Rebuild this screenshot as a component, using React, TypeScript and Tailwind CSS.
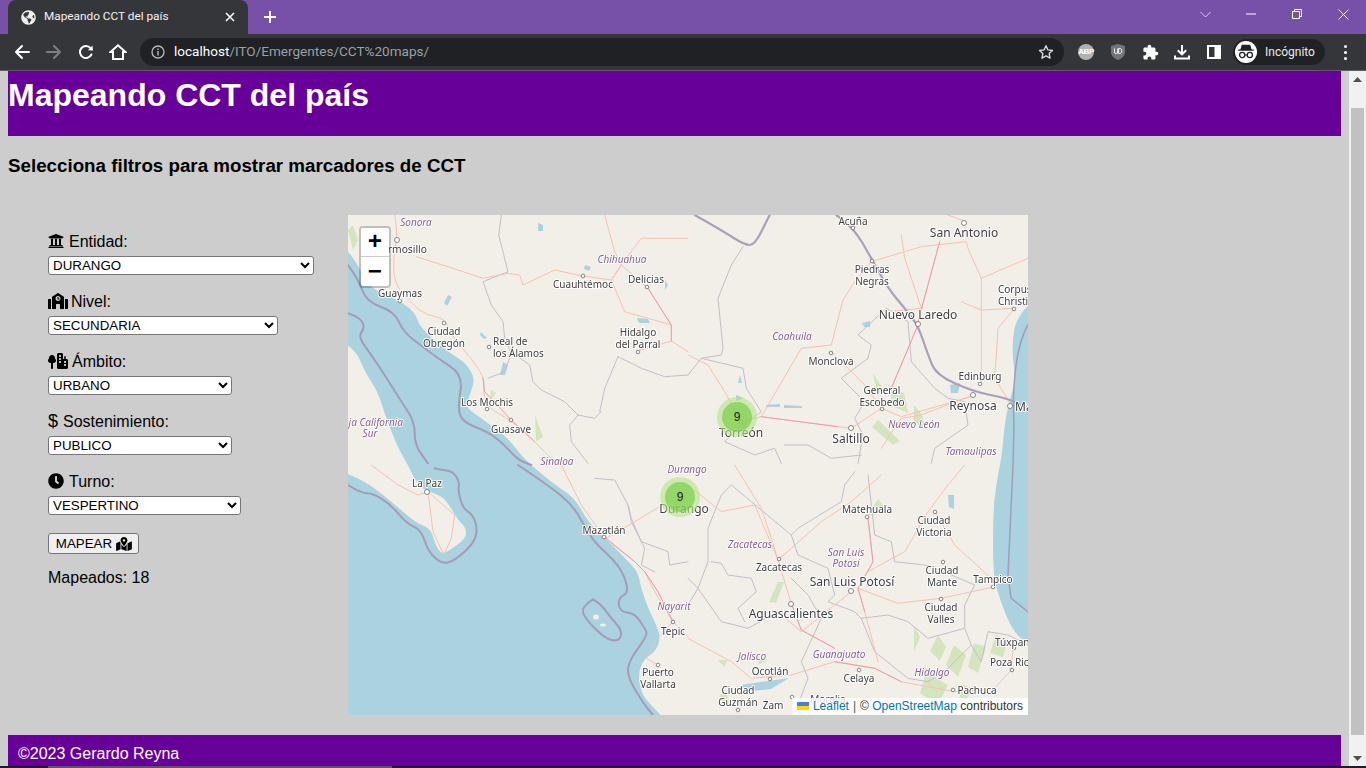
import React from "react";
import { FaGlobeAmericas, FaUniversity, FaSchool, FaClock, FaMapMarkedAlt } from "react-icons/fa";
import { FaTreeCity } from "react-icons/fa6";

type Crop = "A" | "B" | "C" | "D";
const OFF: Record<Crop, [number, number]> = { A: [0, 0], B: [340, 0], C: [0, 250], D: [340, 250] };
const pts = (c: Crop, s: string) => {
  const [ox, oy] = OFF[c];
  const n = s.trim().split(/[\s,]+/).map(Number);
  const out: [number, number][] = [];
  for (let i = 0; i < n.length; i += 2) out.push([ox + n[i] / 3, oy + n[i + 1] / 3]);
  return out;
};
// Smooth curve through the midpoints of a traced chain of points
const smooth = (a: [number, number][]) => {
  let d = `M${a[0][0].toFixed(1)} ${a[0][1].toFixed(1)}`;
  for (let i = 1; i < a.length - 1; i++) {
    const mx = (a[i][0] + a[i + 1][0]) / 2;
    const my = (a[i][1] + a[i + 1][1]) / 2;
    d += `Q${a[i][0].toFixed(1)} ${a[i][1].toFixed(1)} ${mx.toFixed(1)} ${my.toFixed(1)}`;
  }
  const l = a[a.length - 1];
  return d + `L${l[0].toFixed(1)} ${l[1].toFixed(1)}`;
};
const p = (c: Crop, s: string) => smooth(pts(c, s));

const gulf: [number, number][] = [[690,85],[680,90],[672,100],[666,112],[664,140],[668,165],[660,190],[656,215],[654,240],[648,270],[645,300],[645,360],[652,385],[662,410],[673,425],[690,430]];
const west: [number, number][] = [[320,510],[313,500],[300,487],[293,477],[290,457],[297,443],[307,437],[313,423],[307,407],[300,393],[293,373],[290,357],[277,343],[257,323],[240,307],[227,283],[207,270],[183,250],[173,240],[160,223],[133,203],[117,192],[123,177],[127,163],[117,147],[100,137],[72,113],[67,97],[50,85],[20,72],[10,50],[0,36],[-10,30]];
const mainland = `${smooth(gulf)}L690 520L320 520${smooth(west).replace("M", "L")}L-10 -10L690 -10Z`;
const baja = `${smooth([[-10,125],[0,130],[10,140],[17,157],[30,177],[37,200],[50,233],[60,250],[66,263],[74,274],[88,279],[96,283],[103,293],[110,305],[118,313],[118,323],[105,333],[95,339],[90,335],[86,325],[82,313],[68,308],[45,288],[25,272],[8,262],[-10,255]])}Z`;
const outerSea = [
  p("A", "0 150 30 190 55 260 140 290 165 350 230 400 270 430 345 480 330 570 340 620 420 650 470 690 510 735 550 750"),
  p("A", "0 295 40 310 50 340 30 365 70 420 110 480 160 560 200 620 200 690 240 745"),
  p("C", "0 60 40 85 75 85 130 120 175 175 220 195 240 260 285 300 330 280 380 230 388 190 375 150 345 130 330 80 335 50 315 20 285 15 260 10"),
  p("C", "510 0 600 60 680 125 730 225 815 300 845 380 810 400 815 440 860 445 890 490 900 510 840 590 840 640 890 720 915 750"),
  p("C", "735 403 700 425 710 460 770 520 810 530 825 500 790 460 760 420 735 403"),
];
const riverBorder = [
  p("B", "20 0 100 45 170 90 200 90 240 10 245 0"),
  p("B", "445 0 495 35 550 130 600 220 650 280 690 330 720 420 745 480 855 530 960 550 1020 580"),
];
const raw = (c: Crop, s: string) => pts(c, s).map(([x, y], i) => `${i ? "L" : "M"}${x.toFixed(1)} ${y.toFixed(1)}`).join("");
const states = [
  raw("A", "460 0 452 60 480 170 405 200 430 270 465 320 470 370 490 415 470 470 420 490"),
  raw("A", "490 410 545 450 555 500 580 525 650 560 690 600 740 610 760 590"),
  raw("A", "690 600 665 630 670 680 720 745"),
  raw("A", "810 425 770 520 755 590"),
  raw("A", "810 425 880 460 950 485 1020 480"),
  raw("B", "0 480 40 430 165 460 175 520 220 590 150 640 110 680 200 720 260 700 280 745"),
  raw("B", "165 95 130 150 90 250 105 400 100 420 40 430"),
  raw("B", "595 280 510 360 550 390 540 430 460 490 530 560 500 610 525 660 510 745"),
  raw("B", "595 280 660 320 670 440 740 520 780 550 830 560 840 630 740 700 730 745"),
  raw("B", "290 690 360 690 430 730 520 720"),
  raw("C", "740 40 800 45 840 120 850 160 880 230 960 260 965 300 1020 290"),
  raw("C", "840 120 850 170 890 250 880 300 920 320"),
  raw("D", "500 20 470 60 460 110 330 190 310 210 330 270 420 310 440 390 420 410 500 440 520 460"),
  raw("D", "310 210 130 60 100 90 60 190 60 290 30 370 100 470 180 490 270 440"),
  raw("D", "310 340 360 390 400 460 340 590 360 640 320 745"),
  raw("D", "520 460 600 450 660 470 720 520 830 490 850 540 770 620 720 650 660 640 560 560 520 460"),
  raw("D", "540 30 560 210 610 230 620 290 710 300 790 330 860 360 830 420 830 490"),
  raw("D", "70 290 100 295 120 330 190 340 205 380 150 430 170 470"),
  raw("D", "0 340 30 370 0 420"),
  raw("D", "850 540 880 590 900 500 960 510 1020 540"),
];
const roads = [
  p("A", "140 0 150 60 135 130 140 210 195 270 235 300 290 310 310 360 370 430 410 490 405 530 420 580 490 615 560 680 620 740"),
  raw("A", "205 125 300 155 405 190 480 175 515 180 525 210 620 165 700 182 790 195 820 150 880 70 1020 70"),
  raw("A", "770 0 800 110 820 150 790 195 830 290 970 330 970 378 1020 410"),
  raw("A", "820 150 900 220 970 330"),
  raw("A", "870 408 970 378"),
  raw("B", "0 420 60 450 110 530 160 620 220 605 340 400 430 390 465 255 500 200 550 140 700 95 835 80 840 100 880 190 1020 130"),
  raw("B", "220 605 450 635 490 640 580 580 640 605 850 545"),
  raw("B", "430 410 530 510 580 580"),
  raw("B", "690 330 610 520"),
  raw("B", "755 80 690 320"),
  raw("B", "640 60 650 130 700 280 600 290"),
  raw("B", "880 190 880 500"),
  raw("B", "820 260 880 285 980 280 930 340 920 490 970 570"),
  raw("B", "835 20 780 0"),
  raw("B", "580 700 640 610 700 600 855 540"),
  raw("C", "70 0 150 60 210 90 240 80 320 150 310 220 290 265"),
  raw("C", "240 80 255 200 285 265"),
  raw("C", "640 0 700 120 770 220 860 290 890 320 930 380 975 470 920 530 895 580 930 600"),
  raw("C", "775 220 860 170 960 110"),
  raw("C", "890 320 920 380 975 470 1020 515"),
  raw("D", "0 60 100 140 200 120 270 285 310 415"),
  raw("D", "140 0 220 130 250 220 270 285 400 170 490 110 580 30"),
  raw("D", "540 160 555 290 510 370 530 440 570 590"),
  raw("D", "490 380 340 500 270 440"),
  raw("D", "310 415 340 495 440 550"),
  raw("D", "0 520 130 590 190 640 310 630 440 590 560 610 640 650 800 680 900 670"),
  raw("D", "510 370 630 415 760 400 920 365"),
  raw("D", "540 320 650 260 720 140 780 60 830 0"),
  raw("D", "740 140 800 240 915 345"),
  raw("D", "975 550 970 615 900 690"),
];
const motorways = [
  raw("A", "405 490 410 530 490 615 560 680"),
  raw("A", "900 220 970 330 970 378"),
  raw("B", "690 330 610 520"),
  raw("B", "755 80 690 320"),
  raw("B", "220 605 450 635"),
  raw("D", "540 160 555 290 510 370 530 440"),
  raw("D", "310 415 340 495 440 550"),
  raw("D", "440 590 560 610 640 650"),
  raw("C", "775 220 860 290 890 320 930 380 975 470"),
];
const lakes = [
  "M190 8L195 10L195 16L190 16Z","M237 50L243 52L241 56L236 54Z","M289 103L300 104L302 108L291 108Z","M100 80L104 82L99 91L96 88Z",
  "M133 117L139 123L136 124L132 120Z","M155 147L160 150L157 160L152 160Z","M317 65L320 70L317 75Z",
  "M418 190L432 189L432 192L418 192Z","M436 190L454 191L454 193L436 193Z","M392 160L394 168L390 168Z","M388 180L396 183L388 186Z","M514 108L522 106L522 112L516 112Z",
  "M602 170L612 168L610 178L603 178Z","M660 285L664 290L652 290Z","M441 463L420 466L392 470L396 477L423 474Z","M600 280L606 280L606 294L601 292Z",
];
const greens = [
  "M525 158L534 172L530 182Z","M540 170L556 178L560 198L546 192Z","M566 190L574 200L578 216L566 206Z","M530 205L552 226L545 230L524 212Z",
  "M590 420L598 432L592 446L582 436Z","M606 430L618 440L610 462L598 450Z","M626 428L638 432L630 458L620 452Z","M566 411L572 422L566 436Z","M578 458L600 470L590 490L572 478Z","M614 470L628 474L610 492Z",
  "M430 367L436 367L428 388L421 387Z","M412 441L420 445L410 450Z","M370 445L380 445L376 452Z","M375 472L382 488L370 490Z","M520 300L530 284L536 292L526 300Z",
  "M0 15L5 10L10 25L5 35Z","M143 175L148 178L142 185Z","M187 200L195 222L188 226Z","M648 420L660 425L655 442L642 438Z",
];
type L = [string, number, number, number?, "s" | "e"?];
const cities: L[] = [
  ["Hermosillo",79,38,10.3,"e"],["Guaymas",52,82],["Ciudad",96,120],["Obregón",96,132],["Real de",145,130,10,"s"],["los Álamos",145,142,10,"s"],["Los Mochis",139,191],["Guasave",163,218],["Cuauhtémoc",235,73],["Delicias",298,68],["Hidalgo",290,121],["del Parral",290,133],
  ["Acuña",505,10],["San Antonio",616,22,12],["Piedras",524,58],["Negras",524,70],["Nuevo Laredo",570,104,12],["Corpus",650,78,10,"s"],["Christi",650,90,10,"s"],["Monclova",483,150],["Edinburg",632,165],["General",534,179],["Escobedo",534,191],["Reynosa",625,195,12],["Ma",667,196,12,"s"],["Saltillo",503,228,12],["Torreón",393,222,12],
  ["La Paz",79,272],["Mazatlán",256,319],["Tepic",325,420],["Puerto",310,461],["Vallarta",310,473],["Durango",336,298,12],
  ["Matehuala",519,298],["Ciudad",586,309],["Victoria",586,321],["Zacatecas",431,356],["San Luis Potosí",504,371,12],["Ciudad",594,359],["Mante",594,371],["Tampico",645,368],["Ciudad",593,396],["Valles",593,408],["Aguascalientes",443,403,12],["Túxpan",647,431,10,"s"],["Poza Rica",642,451,10,"s"],["Ocotlán",422,460],["Celaya",511,467],["Pachuca",629,479],["Ciudad",390,479],["Guzmán",390,491],["Zam",425,494],["Morelia",480,488],
];
const stateLabels: L[] = [
  ["Sonora",68,11],["Chihuahua",274,48],["Sinaloa",209,250],["ja California",55,211,10,"e"],["Sur",22,222],["Coahuila",444,125],["Nuevo León",566,213],["Tamaulipas",623,240],["Durango",339,258],["Nayarit",326,395],["Zacatecas",402,333],["San Luis",498,341],["Potosí",498,352],["Jalisco",404,445],["Guanajuato",491,443],["Hidalgo",584,461],
];
const dots: [number, number, number?][] = [
  [49,25,2.5],[52,86],[96,108],[141,132],[139,194],[163,205],[235,61],[299,72],[290,137],[505,13],[616,8,2.5],[524,46],[570,109,2.5],[666,94],[483,138],[632,169],[534,194],[625,180,2.5],[662,191,2.5],[503,213,2.5],[393,207],
  [79,277,2.5],[256,322],[325,407],[310,450],[519,302],[587,297],[431,344],[503,376,2.5],[595,347],[645,372],[593,384],[443,389,2.5],[666,433],[664,455],[422,464],[511,455],[605,475],[390,495],[444,482],
];

function MapArt() {
  return (
    <svg viewBox="0 0 680 500" className="block h-[500px] w-[680px] blur-[0.35px]">
      <rect width="680" height="500" fill="#aad3df" />
      <path d={mainland} fill="#f2efe9" />
      <path d={baja} fill="#f2efe9" />
      <ellipse cx="248" cy="402" rx="3" ry="2.5" fill="#f2efe9" />
      <ellipse cx="255" cy="410" rx="3" ry="1.5" fill="#f2efe9" />
      {greens.map((d, i) => <path key={i} d={d} fill="#d3e5bd" />)}
      {lakes.map((d, i) => <path key={i} d={d} fill="#aad3df" />)}
      <g fill="none" strokeLinejoin="round" strokeLinecap="round">
        {outerSea.map((d, i) => <path key={i} d={d} stroke="#a49cb6" strokeWidth="2" />)}
        {states.map((d, i) => <path key={i} d={d} stroke="#c5bccb" strokeWidth="1" />)}
        {roads.map((d, i) => <path key={i} d={d} stroke="#f7c1ae" strokeWidth="1" />)}
        {motorways.map((d, i) => <path key={i} d={d} stroke="#ec9dab" strokeWidth="1" />)}
        {riverBorder.map((d, i) => <path key={i} d={d} stroke="#ab9fb9" strokeWidth="2.2" />)}
        <path d="M680 110C668 130 664 170 666 210L665 250L660 360L663 383L680 397" stroke="#a49cb6" strokeWidth="1.5" />
      </g>
      {dots.map(([x, y, r], i) => <circle key={i} cx={x} cy={y} r={r ?? 1.8} fill="#fff" stroke="#6b6b6b" strokeWidth="0.8" />)}
      <g fontFamily="'Noto Sans','Open Sans',sans-serif" fill="#404040" stroke="#ffffff" strokeWidth="2" paintOrder="stroke" strokeLinejoin="round">
        {cities.map(([t, x, y, s, a], i) => (
          <text key={i} x={x} y={y} fontSize={s ?? 10} textAnchor={a === "s" ? "start" : a === "e" ? "end" : "middle"}>{t}</text>
        ))}
      </g>
      <g fontFamily="'Noto Sans','Open Sans',sans-serif" fontStyle="italic" fill="#85608f" stroke="#ffffff" strokeWidth="1.5" paintOrder="stroke" strokeLinejoin="round">
        {stateLabels.map(([t, x, y, s, a], i) => (
          <text key={i} x={x} y={y} fontSize={s ?? 10} textAnchor={a === "e" ? "end" : "middle"}>{t}</text>
        ))}
      </g>
    </svg>
  );
}

function Cluster({ className }: { className: string }) {
  return (
    <div className={`absolute flex h-10 w-10 items-center justify-center rounded-full bg-[rgba(181,226,140,0.6)] ${className}`}>
      <div className="flex h-[30px] w-[30px] items-center justify-center rounded-full bg-[rgba(110,204,57,0.6)] text-[12px] text-[#222222]">9</div>
    </div>
  );
}

function Field({ icon, label, value, width }: { icon: React.ReactNode; label: string; value: string; width: string }) {
  return (
    <div className="flex flex-col items-start">
      <label className="flex h-[18px] items-center gap-[5px] text-[16px] leading-[18px] text-black">{icon}<span className="translate-y-px">{label}</span></label>
      <select defaultValue={value} className={`mt-[6px] h-[19px] rounded-[3px] border border-[#767676] bg-white text-[13.33px] leading-[15px] text-black ${width}`}>
        <option>{value}</option>
      </select>
    </div>
  );
}

function ToolBtn({ children }: { children: React.ReactNode }) {
  return <div className="flex h-8 w-8 shrink-0 items-center justify-center">{children}</div>;
}

function BrowserChrome() {
  const s = { fill: "none", stroke: "#fff", strokeWidth: 2, strokeLinecap: "round" as const, strokeLinejoin: "round" as const };
  return (
    <div className="shrink-0 font-['Roboto',sans-serif]">
      <div className="flex h-[34px] items-end bg-[#7750a8] pl-2">
        <div className="flex h-[34px] w-[240px] items-center rounded-t-[8px] bg-[#35363a] pl-[13px] pr-[13px] text-white">
          <FaGlobeAmericas className="h-[15px] w-[15px] text-[#f1f1f1]" />
          <span className="ml-[8px] flex-1 text-[11.8px] leading-none text-[#f1f3f4]">Mapeando CCT del país</span>
          <svg width="10" height="10" viewBox="0 0 10 10"><path d="M1 1L9 9M9 1L1 9" stroke="#fff" strokeWidth="1.6" /></svg>
        </div>
        <div className="ml-[15px] flex h-[34px] w-[14px] items-center justify-center">
          <svg width="12" height="12" viewBox="0 0 12 12"><path d="M6 0V12M0 6H12" stroke="#fff" strokeWidth="2" /></svg>
        </div>
        <div className="flex-1" />
        <div className="mb-[15px] flex h-[10px] w-[46px] items-center justify-center">
          <svg width="11" height="7" viewBox="0 0 11 7"><path d="M0.5 1L5.5 6L10.5 1" fill="none" stroke="#d7cbe8" strokeWidth="1" /></svg>
        </div>
        <div className="flex h-[28px] w-[46px] items-center justify-center self-start">
          <svg width="10" height="2" viewBox="0 0 10 2"><path d="M0 1H10" stroke="#fff" strokeWidth="1" /></svg>
        </div>
        <div className="flex h-[28px] w-[46px] items-center justify-center self-start">
          <svg width="10" height="10" viewBox="0 0 10 10"><path d="M0.5 2.5H7.5V9.5H0.5ZM2.5 2.5V0.5H9.5V7.5H7.5" fill="none" stroke="#fff" strokeWidth="1" /></svg>
        </div>
        <div className="flex h-[28px] w-[46px] items-center justify-center self-start">
          <svg width="11" height="11" viewBox="0 0 11 11"><path d="M0.5 0.5L10.5 10.5M10.5 0.5L0.5 10.5" stroke="#fff" strokeWidth="1" /></svg>
        </div>
      </div>
      <div className="flex h-[36px] items-center bg-[#35363a] pl-[6px] pr-[5px]">
        <ToolBtn><svg width="16" height="16" viewBox="0 0 16 16"><path d="M15 8H2M8 2L2 8L8 14" {...s} /></svg></ToolBtn>
        <ToolBtn><svg width="16" height="16" viewBox="0 0 16 16"><path d="M1 8H14M8 2L14 8L8 14" {...s} stroke="#7e7f82" /></svg></ToolBtn>
        <ToolBtn><svg width="16" height="16" viewBox="0 0 16 16"><path d="M13.4 10.5A6 6 0 1 1 12.6 4.2L14 5.5" {...s} /><path d="M14.6 1.5V6.2H9.9Z" fill="#fff" /></svg></ToolBtn>
        <ToolBtn><svg width="18" height="16" viewBox="0 0 18 16"><path d="M1.5 8L9 1.3L16.5 8H14V15H4V8Z" fill="none" stroke="#fff" strokeWidth="2" strokeLinejoin="miter" /></svg></ToolBtn>
        <div className="ml-[6px] flex h-[28px] flex-1 items-center rounded-full bg-[#202124] pl-[11px] pr-[10px]">
          <svg width="14" height="14" viewBox="0 0 14 14"><circle cx="7" cy="7" r="6" fill="none" stroke="#b8babd" strokeWidth="1.3" /><path d="M7 6V10.5M7 3.5V5" stroke="#b8babd" strokeWidth="1.4" /></svg>
          <div className="ml-[9px] flex-1 text-[13.56px] leading-none text-[#9aa0a6]"><span className="text-white">localhost</span>/ITO/Emergentes/CCT%20maps/</div>
          <svg width="16" height="16" viewBox="0 0 24 24"><path d="M12 2.5L14.9 8.9L21.8 9.7L16.7 14.4L18.1 21.3L12 17.8L5.9 21.3L7.3 14.4L2.2 9.7L9.1 8.9Z" fill="none" stroke="#dadce0" strokeWidth="2" strokeLinejoin="round" /></svg>
        </div>
        <div className="ml-[6px] flex h-[32px] items-center">
          <ToolBtn>
            <div className="flex h-4 w-4 items-center justify-center rounded-full bg-[#b1b1b1] font-['Liberation_Sans',sans-serif] text-[8px] font-bold leading-none tracking-[-0.4px] text-white">ABP</div>
          </ToolBtn>
          <ToolBtn>
            <svg width="14" height="16" viewBox="0 0 14 16"><path d="M7 0L14 2V8C14 12 10.5 14.8 7 16C3.5 14.8 0 12 0 8V2Z" fill="#737578" /><path d="M3.5 4.5V8A1.6 1.6 0 0 0 6.7 8V4.5M7.6 4.5V9.5H9C11.4 9.5 11.4 4.5 9 4.5H7.6Z" fill="none" stroke="#fff" strokeWidth="0.9" /></svg>
          </ToolBtn>
          <ToolBtn>
            <svg width="17" height="17" viewBox="0 0 24 24"><path fill="#fff" d="M20.5 11H19V7c0-1.1-.9-2-2-2h-4V3.5C13 2.12 11.88 1 10.5 1S8 2.12 8 3.5V5H4c-1.1 0-1.99.9-1.99 2v3.8H3.5c1.49 0 2.7 1.21 2.7 2.7s-1.21 2.7-2.7 2.7H2V20c0 1.1.9 2 2 2h3.8v-1.5c0-1.49 1.21-2.7 2.7-2.7 1.49 0 2.7 1.21 2.7 2.7V22H17c1.1 0 2-.9 2-2v-4h1.5c1.38 0 2.5-1.12 2.5-2.5S21.88 11 20.5 11z" /></svg>
          </ToolBtn>
          <ToolBtn><svg width="16" height="16" viewBox="0 0 16 16"><path d="M8 1V10M3.8 6.2L8 10.4L12.2 6.2M1 11.5V14.5H15V11.5" fill="none" stroke="#fff" strokeWidth="2" /></svg></ToolBtn>
          <ToolBtn><svg width="14" height="14" viewBox="0 0 14 14"><path d="M1 1H13V13H1Z" fill="none" stroke="#fff" strokeWidth="2" /><path d="M7.5 1H13V13H7.5Z" fill="#fff" /></svg></ToolBtn>
        </div>
        <div className="ml-[3px] flex h-[26px] w-[92px] items-center rounded-full bg-[#202124] pl-[2px]">
          <div className="flex h-[22px] w-[22px] items-center justify-center rounded-full bg-white">
            <svg width="18" height="16" viewBox="0 0 18 16">
              <path d="M4.8 0.8H13.2L14.6 5.5H16.8V6.8H1.2V5.5H3.4Z" fill="#202124" />
              <circle cx="5.2" cy="11" r="2.6" fill="none" stroke="#202124" strokeWidth="1.3" />
              <circle cx="12.8" cy="11" r="2.6" fill="none" stroke="#202124" strokeWidth="1.3" />
              <path d="M7.8 11H10.2" stroke="#202124" strokeWidth="1.1" />
            </svg>
          </div>
          <span className="ml-[8px] text-[12px] leading-none text-[#e8eaed]">Incógnito</span>
        </div>
        <div className="ml-[4px] flex w-8 flex-col items-center gap-[3px]">
          <span className="h-[3px] w-[3px] rounded-full bg-white" /><span className="h-[3px] w-[3px] rounded-full bg-white" /><span className="h-[3px] w-[3px] rounded-full bg-white" />
        </div>
      </div>
      <div className="h-px bg-[#5f6063]" />
    </div>
  );
}

export default function App() {
  const ic = "text-black shrink-0";
  return (
    <div className="flex h-screen w-full flex-col overflow-hidden bg-[#cdcdcd] font-['Liberation_Sans',Arial,sans-serif]">
      <BrowserChrome />
      <div className="flex min-h-0 flex-1">
        <div className="min-w-0 flex-1 overflow-hidden px-2">
          <header className="h-[65px] bg-[#660099] pt-[6px] text-[32px] font-bold leading-[37px] text-white">Mapeando CCT del país</header>
          <h3 className="mt-[18px] text-[18.76px] font-bold leading-[23px] text-black">Selecciona filtros para mostrar marcadores de CCT</h3>
          <div className="mt-[38px] flex items-start">
            <div className="flex w-[340px] shrink-0 flex-col gap-[17px] pl-10 pt-[17px]">
              <Field icon={<FaUniversity className={`${ic} h-4 w-4`} />} label="Entidad:" value="DURANGO" width="w-[266px]" />
              <Field icon={<FaSchool className={`${ic} -mr-[2px] h-4 w-[20px]`} />} label="Nivel:" value="SECUNDARIA" width="w-[230px]" />
              <Field icon={<FaTreeCity className={`${ic} -mr-px h-4 w-[20px]`} />} label="Ámbito:" value="URBANO" width="w-[184px]" />
              <Field icon={<span className="w-[10px] text-[18px] font-light">$</span>} label="Sostenimiento:" value="PUBLICO" width="w-[184px]" />
              <Field icon={<FaClock className={`${ic} h-4 w-4`} />} label="Turno:" value="VESPERTINO" width="w-[193px]" />
              <button className="mt-px flex h-[21px] w-[91px] items-center justify-center gap-1 rounded-[3px] border border-[#767676] bg-[#efefef] pl-[1px] text-[13.33px] text-black">
                MAPEAR <FaMapMarkedAlt className="h-[14px] w-[16px]" />
              </button>
              <div className="-mt-[2px] text-[16px] leading-[18px] text-black">Mapeados: 18</div>
            </div>
            <div className="relative h-[500px] w-[680px] shrink-0 overflow-hidden">
              <MapArt />
              <Cluster className="left-[369px] top-[182px]" />
              <Cluster className="left-[312px] top-[262px]" />
              <div className="absolute left-[11px] top-[11px] flex w-[32px] flex-col rounded-[4px] border-2 border-[rgba(0,0,0,0.2)] bg-clip-padding">
                <div className="flex h-[29px] items-center justify-center rounded-t-[2px] border-b border-[#cccccc] bg-white pt-[2px] font-['Liberation_Mono',monospace] text-[24px] font-bold leading-none text-black">+</div>
                <div className="flex h-[29px] items-center justify-center rounded-b-[2px] bg-white pt-[2px] font-['Liberation_Mono',monospace] text-[24px] font-bold leading-none text-black">−</div>
              </div>
              <div className="absolute bottom-0 right-0 flex h-[17px] items-center bg-[rgba(255,255,255,0.8)] pb-[1px] pl-[5px] pr-[5px] text-[12px] leading-none text-[#333333]">
                <svg width="12" height="8" viewBox="0 0 12 8" className="mr-[4px]"><rect width="12" height="4" fill="#4C7BE1" /><rect y="4" width="12" height="4" fill="#FFD500" /></svg>
                <span className="text-[#0078a8]">Leaflet</span>
                <span className="mx-[4px] text-[#555555]">|</span>
                <span>©&nbsp;</span><span className="text-[#0078a8]">OpenStreetMap</span><span>&nbsp;contributors</span>
              </div>
            </div>
          </div>
          <footer className="mt-[20px] h-[40px] bg-[#660099] pl-[10px] pt-[10px] text-[16px] leading-[18px] text-white">©2023 Gerardo Reyna</footer>
        </div>
        <aside className="flex w-[17px] shrink-0 flex-col items-center bg-[#f1f1f1]">
          <div className="flex h-[17px] w-full items-center justify-center">
            <svg width="9" height="5" viewBox="0 0 9 5"><path d="M4.5 0L9 5H0Z" fill="#505050" /></svg>
          </div>
          <div className="mt-[20px] h-[627px] w-[13px] bg-[#c1c1c1]" />
          <div className="flex flex-1 items-center justify-center pt-[15px]">
            <svg width="9" height="5" viewBox="0 0 9 5"><path d="M4.5 5L9 0H0Z" fill="#505050" /></svg>
          </div>
        </aside>
      </div>
      <div className="flex h-[2px] shrink-0 bg-[#201a2a]">
        <div className="ml-[48px] h-full w-[344px] bg-[#5a5560]" />
      </div>
    </div>
  );
}
